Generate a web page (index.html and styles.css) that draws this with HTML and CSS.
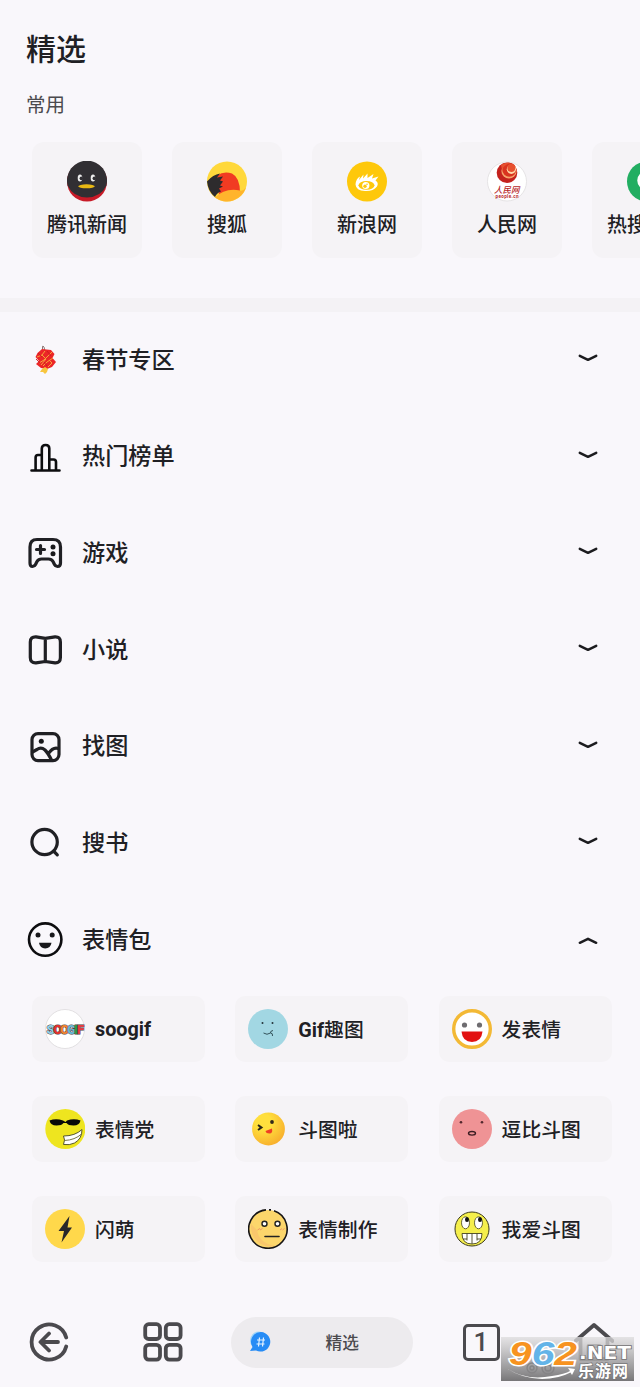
FILE: index.html
```html
<!DOCTYPE html>
<html lang="zh-CN">
<head>
<meta charset="utf-8">
<title>精选</title>
<link rel="stylesheet" href="styles.css">
</head>
<body>
<div class="page">
  <header class="head">
    <h1 class="title">精选</h1>
    <h2 class="subtitle">常用</h2>
  </header>

  <section class="sites">
    <div class="site">
      <svg class="logo" viewBox="0 0 40 40">
        <circle cx="20" cy="20" r="20" fill="#c81a27"/>
        <path d="M0.6 24A20 20 0 1 1 39.4 24Q34 35.500 20 36Q6 35.500 0.600 24Z" fill="#312f33"/>
        <ellipse cx="13" cy="16.500" rx="2.300" ry="3.500" fill="#eee"/>
        <ellipse cx="14.300" cy="16.800" rx="1.700" ry="1.900" fill="#312f33"/>
        <ellipse cx="26" cy="16.500" rx="2.300" ry="3.500" fill="#eee"/>
        <ellipse cx="27.300" cy="16.800" rx="1.700" ry="1.900" fill="#312f33"/>
        <ellipse cx="19.500" cy="24.800" rx="8.300" ry="2" fill="#e9b914"/>
      </svg>
      <span>腾讯新闻</span>
    </div>
    <div class="site">
      <svg class="logo" viewBox="0 0 40 40">
        <circle cx="20" cy="20" r="20" fill="#ffd83b"/>
        <path d="M10 14Q17 9 25 12Q33 16 33 31Q24 27 12 34Z" fill="#f13b22"/>
        <path d="M8 36Q18 26 33 29Q36 30 39 26A20 20 0 0 1 8 36Z" fill="#ffb42c"/>
        <path d="M0 20Q6 13 13 12L10 16L16 15L13 19L16 20L13 24L16 25L12 27L14 30Q10 31 8 35.500Q1 30 0 20Z" fill="#2d2b2d"/>
      </svg>
      <span>搜狐</span>
    </div>
    <div class="site">
      <svg class="logo" viewBox="0 0 40 40">
        <circle cx="20" cy="20" r="20" fill="#fec80b"/>
        <path d="M8.500 23Q9 17 13 15L12 18.500L16.500 13L16 17L20.500 12L20.500 16.500L26.500 12.500L25 17L31.500 15L28.500 19Q32 21 30 25Q26 30 18 29.500Q9 29 8.500 23Z" fill="#fff"/>
        <ellipse cx="19.500" cy="23.800" rx="8" ry="4.400" fill="#fec80b"/>
        <circle cx="18.800" cy="24" r="3.600" fill="#fff"/>
        <circle cx="18" cy="24.800" r="1.700" fill="#fec80b"/>
        <circle cx="20" cy="22.800" r=".8" fill="#fec80b"/>
      </svg>
      <span>新浪网</span>
    </div>
    <div class="site">
      <svg class="logo" viewBox="0 0 40 40">
        <circle cx="20" cy="20" r="19.500" fill="#fff" stroke="#e5e3e5"/>
        <circle cx="20" cy="11.200" r="10.300" fill="#c4221d"/>
        <circle cx="22" cy="9.500" r="7.600" fill="#f6a36a"/>
        <circle cx="22.300" cy="8.300" r="7" fill="#d9331f"/>
        <circle cx="24.400" cy="7.800" r="4.600" fill="#ffd9a9"/>
        <circle cx="24.300" cy="6.500" r="3.900" fill="#e7502e"/>
        <path d="M14 4Q17 0.500 24 1.500Q17 3 15 8Z" fill="#e7502e"/>
        <text class="people-cn" x="7" y="31.500">人民网</text>
        <text class="people-en" x="8.500" y="36" textLength="23">people.cn</text>
      </svg>
      <span>人民网</span>
    </div>
    <div class="site">
      <svg class="logo" viewBox="0 0 40 40">
        <circle cx="20" cy="20" r="20" fill="#22ae62"/>
        <circle cx="20" cy="19" r="8" fill="none" stroke="#fff" stroke-width="3.500"/>
        <path d="M26 25L31 30" stroke="#fff" stroke-width="3.500"/>
      </svg>
      <span>热搜榜单</span>
    </div>
  </section>

  <div class="divider"></div>

  <nav class="menu">
    <div class="row">
      <svg class="ico" viewBox="0 0 36 36">
        <path d="M15.500 7V5Q15.500 3 17 5L18 9" fill="none" stroke="#8c7775" stroke-width="1"/>
        <path d="M10.500 11L15 7L24 8L27.500 12L25.500 16L29 20L25 25L20 27L14 26L9 22L12 19L8.500 15Z" fill="#ec2527"/>
        <path d="M10 15L15 13L18 9M12 21L17 18L25 10M16 24L20 20L26 16M21 25L25 21L22 18M15 13L19 17L14 23" fill="none" stroke="#f6a43a" stroke-width="1"/>
        <path d="M9 17L13 21M20 9L24 14M11 11L15 15M17 20L20 24" stroke="#c91b23" stroke-width=".9"/>
        <path d="M15 27L18 25L21 27L20 30L18 32L16 30L13 30Z" fill="#f8c63f"/>
      </svg>
      <span>春节专区</span>
      <svg class="chev" viewBox="0 0 20 10"><path d="M1.800 2.800L10 6.800L18.200 2.800"/></svg>
    </div>
    <div class="row">
      <svg class="ico line black" viewBox="0 0 36 36">
        <path d="M4.500 31.500H32.500M8.600 31V18.500Q8.600 16 11 16H14.800M14.800 31V9.500Q14.800 6 18.600 6Q22.300 6 22.300 9.500V31M22.300 20.500H26.500Q29 20.500 29 23V31"/>
      </svg>
      <span>热门榜单</span>
      <svg class="chev" viewBox="0 0 20 10"><path d="M1.800 2.800L10 6.800L18.200 2.800"/></svg>
    </div>
    <div class="row">
      <svg class="ico line" viewBox="0 0 36 36">
        <path d="M10 4.500H26Q33.500 4.500 33.500 12V28Q33.500 31.500 30.500 31.500Q28.500 31.500 27.500 29.500L26 26.500Q24.500 24 21.500 24H14.500Q11.500 24 10 26.500L8.500 29.500Q7.500 31.500 5.500 31.500Q3 31.500 3 28V12Q3 4.500 10 4.500Z"/>
        <path d="M9.500 14.500H17.500M13.500 10.500V18.500"/>
        <circle class="dot" cx="26" cy="12" r="2.500"/><circle class="dot" cx="26" cy="18.800" r="2.500"/>
      </svg>
      <span>游戏</span>
      <svg class="chev" viewBox="0 0 20 10"><path d="M1.800 2.800L10 6.800L18.200 2.800"/></svg>
    </div>
    <div class="row">
      <svg class="ico line" viewBox="0 0 36 36">
        <path d="M18.300 6.300L9 4.800Q3.300 4.500 3.300 10V25.500Q3.300 31.100 9 30.800L18.300 29.500L28 30.800Q33.400 31.100 33.400 25.500V10Q33.400 4.500 28 4.800ZM18.300 6.500V29.300"/>
      </svg>
      <span>小说</span>
      <svg class="chev" viewBox="0 0 20 10"><path d="M1.800 2.800L10 6.800L18.200 2.800"/></svg>
    </div>
    <div class="row">
      <svg class="ico line" viewBox="0 0 36 36">
        <rect x="5" y="4.600" width="27" height="27" rx="6"/>
        <path d="M5.500 23L10 20.500Q14 17.500 18 21Q21 24 24.500 31M21.500 24.500Q26 17.500 31.500 19.500"/>
        <circle class="dot" cx="14.300" cy="12.200" r="2.500"/>
      </svg>
      <span>找图</span>
      <svg class="chev" viewBox="0 0 20 10"><path d="M1.800 2.800L10 6.800L18.200 2.800"/></svg>
    </div>
    <div class="row">
      <svg class="ico line" viewBox="0 0 36 36">
        <circle cx="17.600" cy="17" r="12.700"/><path d="M27 26.500L30.300 29.800"/>
      </svg>
      <span>搜书</span>
      <svg class="chev" viewBox="0 0 20 10"><path d="M1.800 2.800L10 6.800L18.200 2.800"/></svg>
    </div>
    <div class="row">
      <svg class="ico line black" viewBox="0 0 36 36">
        <circle cx="18.200" cy="17.600" r="16.200"/>
        <circle class="dot" cx="11" cy="12.900" r="2.500"/><circle class="dot" cx="25.200" cy="12.900" r="2.500"/>
        <path class="dot" d="M12 20.800H24.500Q23.500 26.500 18.200 26.500Q13 26.500 12 20.800Z"/>
      </svg>
      <span>表情包</span>
      <svg class="chev up" viewBox="0 0 20 10"><path d="M1.800 6.800L10 2.800L18.200 6.800"/></svg>
    </div>
  </nav>

  <section class="grid">
    <div class="card">
      <svg class="logo" viewBox="0 0 40 40">
        <circle cx="20" cy="20" r="19.500" fill="#fff" stroke="#e2e0e2"/>
        <text class="soogif" y="25.200"><tspan x="1.500" fill="#8fd0e6">S</tspan><tspan x="8.300" fill="#e5302c">O</tspan><tspan x="15" fill="#f0832f">O</tspan><tspan x="22" fill="#68b8d4">G</tspan><tspan x="29.200" fill="#279b46">I</tspan><tspan x="32" fill="#e93b3f">F</tspan></text>
      </svg>
      <span class="latin">soogif</span>
    </div>
    <div class="card">
      <svg class="logo" viewBox="0 0 40 40">
        <circle cx="20" cy="20" r="20" fill="#a2d7e3"/>
        <circle cx="14.500" cy="14" r="1" fill="#23343a"/><circle cx="24.500" cy="14" r="1" fill="#23343a"/>
        <path d="M15.500 24Q19 26.500 22.500 24Q22 22 25 21.500M22.500 24Q25 24 24.500 27" fill="none" stroke="#34535b"/>
      </svg>
      <span><b>Gif</b>趣图</span>
    </div>
    <div class="card">
      <svg class="logo" viewBox="0 0 40 40">
        <circle cx="20" cy="20" r="18.300" fill="#fff" stroke="#f3b935" stroke-width="3.400"/>
        <circle cx="12.500" cy="16" r="2.600" fill="#6e6c70"/><circle cx="27.500" cy="16" r="2.600" fill="#6e6c70"/>
        <path d="M9.500 22.500H30.500Q29.500 33 20 33T9.500 22.500Z" fill="#e21212"/>
      </svg>
      <span>发表情</span>
    </div>
    <div class="card">
      <svg class="logo" viewBox="0 0 40 40">
        <circle cx="20.300" cy="20" r="20" fill="#eee51f"/>
        <path d="M4.500 11.500Q11 9 18 11.500L20.500 13L22 11.500Q29 9 35.500 11.500Q34.500 16.500 28.500 16.500Q23 16.500 21.500 14H18.500Q17 16.500 11.500 16.500Q5.500 16.500 4.500 11.500Z" fill="#080808"/>
        <path d="M18.500 27Q30 27 37 20.500Q37 30 29.500 34Q24.500 36.500 18.500 35.500L19.500 31Z" fill="#fff" stroke="#55552c"/>
        <path d="M19.500 31.500Q30 31 36.500 25" fill="none" stroke="#77764a"/>
      </svg>
      <span>表情党</span>
    </div>
    <div class="card">
      <svg class="logo" viewBox="0 0 40 40">
        <defs><radialGradient id="sun" cx=".35" cy=".3" r=".8"><stop offset=".3" stop-color="#ffdf3d"/><stop offset="1" stop-color="#f7a92b"/></radialGradient></defs>
        <circle cx="20.500" cy="20" r="16.400" fill="url(#sun)"/>
        <path d="M10 16L13.500 18.500L10 21M11 17L13 18.500" fill="none" stroke="#2b2619" stroke-width="2"/>
        <circle cx="24" cy="13" r="1.900" fill="#33291a"/>
        <path d="M17.500 22L24 19.500Q25 24.500 21.500 24.500Q18 24.500 17.500 22Z" fill="#ef3f24"/>
      </svg>
      <span>斗图啦</span>
    </div>
    <div class="card">
      <svg class="logo" viewBox="0 0 40 40">
        <circle cx="20" cy="20" r="20" fill="#ef9395"/>
        <circle cx="9" cy="13.300" r="1.300" fill="#52272c"/><circle cx="30" cy="13.300" r="1.300" fill="#52272c"/>
        <ellipse cx="20" cy="24.300" rx="3.500" ry="1.800" fill="none" stroke="#3b1d22" stroke-width="1.400"/>
      </svg>
      <span>逗比斗图</span>
    </div>
    <div class="card">
      <svg class="logo" viewBox="0 0 40 40">
        <circle cx="20" cy="20" r="20" fill="#ffd84b"/>
        <path d="M24.500 7L13.500 22H19L16.500 33.500L27 18.500H22.500Z" fill="#29272a"/>
      </svg>
      <span>闪萌</span>
    </div>
    <div class="card">
      <svg class="logo" viewBox="0 0 40 40">
        <circle cx="20" cy="20" r="19" fill="#fcd66b"/>
        <path d="M3 15Q2 29 13 35Q20 39 27 37Q11 34 9 21Z" fill="#f9c76c"/>
        <path d="M21 .900H23M26 1.800A19.200 19.200 0 1 1 18 .900" fill="none" stroke="#171515" stroke-width="1.600"/>
        <circle cx="16.500" cy="14.700" r="2.500" fill="#fff" stroke="#222" stroke-width="1.400"/><circle cx="29.500" cy="14.700" r="2.500" fill="#fff" stroke="#222" stroke-width="1.400"/>
        <path d="M9.500 21L12 19.500M12 21L14.500 19.500M32 21L34 19.500M34.500 21L36.500 19.500" stroke="#f19a68"/>
        <path d="M17 27.500H31" stroke="#222" stroke-width="1.600" stroke-linecap="round"/>
      </svg>
      <span>表情制作</span>
    </div>
    <div class="card">
      <svg class="logo" viewBox="0 0 40 40">
        <circle cx="20" cy="20" r="17" fill="#f5ef4c" stroke="#3b3a1d"/>
        <ellipse cx="13.500" cy="13.800" rx="4" ry="6" fill="#fff" stroke="#45441f" stroke-width=".8"/><ellipse cx="26.500" cy="13.800" rx="4" ry="6" fill="#fff" stroke="#45441f" stroke-width=".8"/>
        <ellipse cx="15" cy="10.500" rx="2" ry="2.600" fill="#111"/><ellipse cx="28" cy="10.500" rx="2" ry="2.600" fill="#111"/>
        <path d="M10 24.500H30Q30 35 20 35T10 24.500Z" fill="#fff" stroke="#45441f" stroke-width=".9"/>
        <path d="M15 24.500V31.500M20 24.500V35M25 24.500V31.500M11 30H15M25 30H29" stroke="#45441f" stroke-width=".9"/>
      </svg>
      <span>我爱斗图</span>
    </div>
  </section>

  <footer class="bar">
    <svg class="tool back" viewBox="0 0 40 40">
      <path d="M37.200 15.500A17.600 17.600 0 1 0 37.200 24.500M29 20H12M20 11.500L11.500 20L20 28.500"/>
    </svg>
    <svg class="tool tiles" viewBox="0 0 40 40">
      <rect x="2.200" y="2.200" width="14.800" height="14.800" rx="3.500"/><rect x="22.800" y="2.200" width="14.800" height="14.800" rx="3.500"/>
      <rect x="2.200" y="22.800" width="14.800" height="14.800" rx="3.500"/><rect x="22.800" y="22.800" width="14.800" height="14.800" rx="3.500"/>
    </svg>
    <div class="pill">
      <svg class="hash" viewBox="0 0 22 22">
        <circle cx="10" cy="9.500" r="9" fill="#9ed5fa"/>
        <path d="M12 1A9.800 9.800 0 1 1 7 19.500L1 20L3.500 16A9.800 9.800 0 0 1 12 1Z" fill="#278cf5"/>
        <path d="M10.500 6.500L9.500 15.500M14.500 6.500L13.500 15.500M8 9H16M7.500 13H15.500" stroke="#e6f3ff" stroke-width="1.200"/>
      </svg>
      <span>精选</span>
    </div>
    <div class="tabs">1</div>
    <svg class="tool home" viewBox="0 0 40 40">
      <path d="M1.500 19L20 3L38.500 19M6.500 16V37H33.500V16M14.500 37V24H25.500V37"/>
    </svg>
  </footer>

  <svg class="watermark" viewBox="0 0 133 44">
    <defs>
      <linearGradient id="shade" x1="0" y1="0" x2="0" y2="1"><stop offset="0" stop-color="#dddcdd" stop-opacity=".75"/><stop offset=".5" stop-color="#a9a8a9" stop-opacity=".88"/><stop offset="1" stop-color="#777678"/></linearGradient>
    </defs>
    <rect width="133" height="44" fill="url(#shade)"/>
    <g fill="none" stroke="#858486" stroke-width="1.300">
      <circle cx="31" cy="31" r="5"/><circle cx="31" cy="31" r="2"/><circle cx="47" cy="31" r="6"/><circle cx="47" cy="31" r="3"/>
    </g>
    <text class="wm-num" x="8" y="28" textLength="68" lengthAdjust="spacingAndGlyphs"><tspan fill="#f79320">9</tspan><tspan fill="#63b4e8">6</tspan><tspan fill="#f79320">2</tspan></text>
    <text class="wm-net" x="78" y="22" textLength="52" lengthAdjust="spacingAndGlyphs">.NET</text>
    <text class="wm-cn" x="77" y="39.500" textLength="50">乐游网</text>
    <path d="M7 32Q26 44 51 39Q64 37 69 34L67 31L74 32L71 38L69.500 35.500Q57 42 41 42Q20 41 7 32Z" fill="#fff"/>
  </svg>
</div>
</body>
</html>
```
FILE: styles.css
```css
* {
  box-sizing: border-box;
}

body {
  margin: 0;
  background: #f9f7fb;
  color: #202024;
  font-family: Roboto, "Noto Sans CJK SC", sans-serif;
  font-weight: 500;
}

.page {
  position: relative;
  display: flex;
  flex-direction: column;
  width: 640px;
  height: 1387px;
  overflow: hidden;
}

.head {
  height: 142px;
  padding: 28px 0 0 26px;
}

.title,
.subtitle {
  margin: 0;
  font-weight: 500;
}

.title {
  font-size: 30px;
  line-height: 44px;
}

.subtitle {
  margin-top: 20px;
  color: #4b4a4e;
  font-size: 19.500px;
  line-height: 28px;
  font-weight: 400;
}

.sites {
  display: flex;
  gap: 30px;
  height: 156.400px;
  padding-left: 32px;
}

.site {
  display: flex;
  flex: none;
  flex-direction: column;
  align-items: center;
  width: 110px;
  height: 116px;
  padding-top: 19px;
  border-radius: 12px;
  background: #f5f3f6;
  font-size: 20px;
  line-height: 28px;
}

.site span {
  margin-top: 9px;
  white-space: nowrap;
}

.logo {
  flex: none;
  width: 40px;
  height: 41px;
}

.people-cn {
  font: italic 500 8.500px "Noto Sans CJK SC", sans-serif;
  fill: #b8282b;
}

.people-en {
  font: 700 4.500px Roboto, sans-serif;
  fill: #b8282b;
}

.divider {
  flex: none;
  height: 13.300px;
  background: #f4f2f5;
}

.menu {
  display: flex;
  flex: none;
  flex-direction: column;
}

.row {
  display: flex;
  align-items: center;
  height: 96.670px;
  padding: 0 42px 0 27px;
  font-size: 23.200px;
  line-height: 34px;
}

.row span {
  flex: 1;
  margin: -.6px 0 0 19px;
}

.ico {
  width: 36px;
  height: 36px;
}

.line {
  fill: none;
  stroke: #202024;
  stroke-width: 3.200;
  stroke-linecap: round;
  stroke-linejoin: round;
}

.black {
  stroke: #0d0d0f;
  stroke-width: 2.600;
}

.dot {
  fill: #18181b;
  stroke: none;
}

.chev {
  width: 20px;
  height: 10px;
  margin-bottom: 4px;
  fill: none;
  stroke: #1c1c1f;
  stroke-width: 2.500;
  stroke-linecap: round;
  stroke-linejoin: round;
}

.chev.up {
  margin: 3px 0 0;
}

.grid {
  display: grid;
  grid-template-columns: repeat(3, 173px);
  grid-auto-rows: 66px;
  gap: 34px 30.300px;
  padding: 7.700px 0 0 32px;
}

.card {
  display: flex;
  align-items: center;
  gap: 10px;
  padding-left: 13px;
  border-radius: 10px;
  background: #f5f3f6;
  font-size: 19.800px;
}

.card .logo {
  height: 40px;
}

.card b,
.card .latin {
  font-weight: 700;
}

.card .latin {
  margin-top: 2px;
}

.soogif {
  font: 900 13px Roboto, sans-serif;
  stroke: #4a4244;
  stroke-width: 1px;
  paint-order: stroke;
}

.bar {
  display: flex;
  align-items: center;
  height: 51px;
  margin-top: 55px;
  padding: 0 26px 0 29px;
}

.tool {
  width: 40px;
  height: 40px;
  fill: none;
  stroke: #4b4a4e;
  stroke-width: 3.800;
  stroke-linecap: round;
  stroke-linejoin: round;
}

.tiles {
  margin-left: 73.500px;
}

.pill {
  display: flex;
  align-items: center;
  width: 182px;
  height: 51px;
  margin-left: 48.500px;
  padding-left: 18px;
  border-radius: 26px;
  background: #edebee;
  color: #4b4a4e;
  font-size: 16.700px;
}

.pill span {
  margin-left: 54.500px;
}

.hash {
  width: 22px;
  height: 22px;
}

.tabs {
  display: flex;
  align-items: center;
  justify-content: center;
  width: 37px;
  height: 37px;
  margin-left: 49.500px;
  border: 3px solid #4b4a4e;
  border-radius: 5px;
  color: #4b4a4e;
  font: 500 26px Roboto, sans-serif;
}

.home {
  margin-left: 74.500px;
}

.watermark {
  position: absolute;
  left: 501px;
  top: 1337px;
  width: 133px;
  height: 44px;
}

.wm-num {
  font: italic 700 33px "Liberation Sans", sans-serif;
  stroke: #fff;
  stroke-width: 3px;
  paint-order: stroke;
}

.wm-net {
  font: 700 17px "DejaVu Sans", sans-serif;
  fill: #fff;
  stroke: #737274;
  stroke-width: 1.500px;
  paint-order: stroke;
}

.wm-cn {
  font: 700 16px "Noto Sans CJK SC", sans-serif;
  fill: #fff;
  stroke: #777678;
  stroke-width: 1.500px;
  paint-order: stroke;
}
```
